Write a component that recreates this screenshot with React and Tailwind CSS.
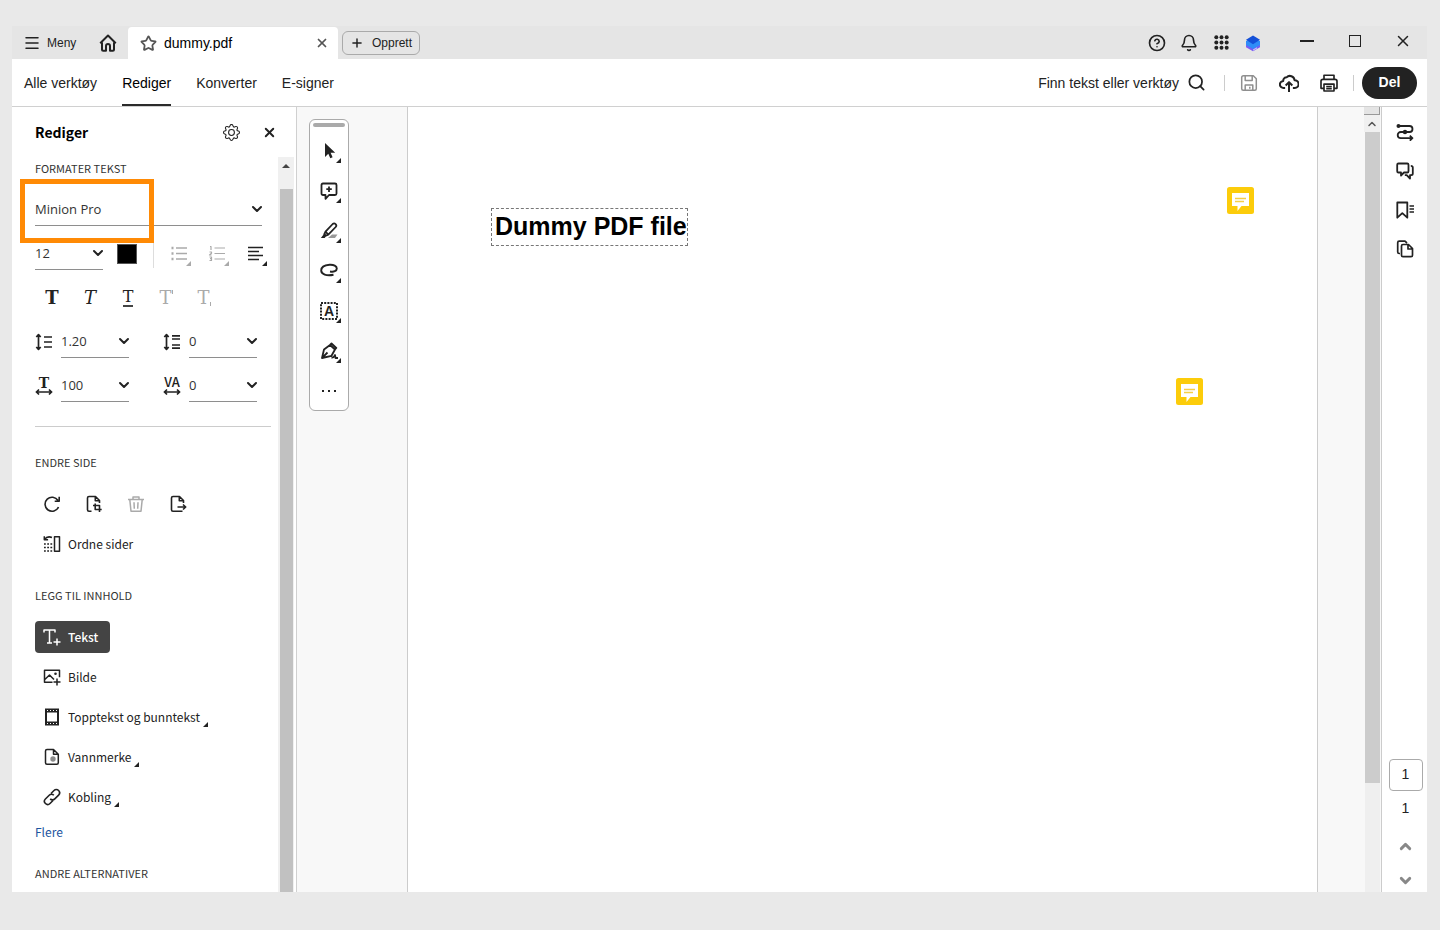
import { useState } from 'react'
import { Menu, Star, X, Plus, Search, CircleHelp, Bell, ChevronDown, ChevronUp } from 'lucide-react'
import { BsGear } from 'react-icons/bs'

const MENU_ITEMS = ['Alle verktøy', 'Rediger', 'Konverter', 'E-signer']

const SHAPES = {
  home: <path d="M2 9.2 9 2.3l7 6.9M3.600 8.500V15q0 1 1 1h2.600v-4.200a1.800 1.800 0 0 1 3.600 0V16h2.600q1 0 1-1V8.500" strokeWidth="1.800" />,
  apps: (
    <g fill="currentColor" stroke="none">
      {[3.500, 9, 14.500].map(y => [3.500, 9, 14.500].map(x => <circle key={`${x}-${y}`} cx={x} cy={y} r="2.100" />))}
    </g>
  ),
  logo: (
    <g stroke="none">
      <path d="M2 9.500 9 7l7 2.500v3.800l-7 4-7-4z" fill="#7a5cf5" />
      <path d="M2 7 9 4l7 3v4l-7 4-7-4z" fill="#2f8df8" />
      <path d="M2 5.800 9 1.500l7 4.300-7 4.400z" fill="#1450d8" />
      <path d="m9 15.500 4-2.300v1.300l-4 2.300z" fill="#c9c4fb" />
    </g>
  ),
  save: <path d="M3.500 1.700h9.800l3 3v10.100a1.500 1.500 0 0 1-1.500 1.500H3.200a1.500 1.500 0 0 1-1.500-1.500V3.500a1.800 1.800 0 0 1 1.800-1.800ZM5.200 2v4.500h7V2M5.200 16v-5h7.600v5M9.800 12.800v2" />,
  upload: <path d="M5.500 13.500H4.200a3.200 3.200 0 0 1-.4-6.400 3 3 0 0 1 3-3.200 4.200 4.200 0 0 1 7.200 2.600 3.500 3.500 0 0 1 .2 7h-1.700M9 17V8.500M6 11.200l3-3 3 3" strokeWidth="1.800" />,
  print: <path d="M4.500 5.500V2h9v3.500M4 13.800H1.800V7.500q0-1.800 1.800-1.800h10.800q1.800 0 1.800 1.800v6.300H14M4.500 10h9v6.200h-9zM6.500 12.200h5M6.500 14.200h5" />,
  bullets: <g><path d="M6 3h11M6 8.500h11M6 14h11" /><path d="M1.500 3h2M1.500 8.500h2M1.500 14h2" strokeWidth="2.500" /></g>,
  numbers: <path d="M6.500 3h10.500M6.500 8.500h10.500M6.500 14h10.500M2 1.500h1v3.500M1.500 7h2v1.300l-2 1.700h2M1.500 12h2v3.500h-2M2 13.700h1.500" strokeWidth="1.200" />,
  align: <path d="M2 2.500h15M2 6.500h11M2 10.500h15M2 14.500h11" strokeWidth="1.700" />,
  leading: <path d="M3.500 2v14M1.300 4l2.200-2.300L5.700 4M1.300 14l2.200 2.300L5.700 14M9 4h8M9 9h8M9 14h8" strokeWidth="1.700" />,
  spacing: <path d="M3.500 2v14M1.300 4l2.200-2.300L5.700 4M1.300 14l2.200 2.300L5.700 14M9 2.800h8M9 6h8M9 12h8M9 15.200h8" strokeWidth="1.700" />,
  rotate: <path d="M15 5.500A7 7 0 1 0 15.500 12M16.200 1.800v4.500h-4.500" strokeWidth="1.600" />,
  crop: <path d="M6.500 16.200H4a1.500 1.500 0 0 1-1.500-1.500V3A1.500 1.500 0 0 1 4 1.500h6.500l4 4V8M10.300 1.700v4h4M10.200 8.500v6h6.500M8 10.500h6.500v6.500" strokeWidth="1.600" />,
  trash: <path d="M1 4.500h16M6 4.300V2h6v2.300M2.800 4.700l1.200 11.500h10l1.200-11.500M7 7.200l.3 6.500M11 7.200l-.3 6.500" />,
  extract: <path d="M13.500 16.200H4a1.500 1.500 0 0 1-1.500-1.500V3A1.500 1.500 0 0 1 4 1.500h6.500l4 4V8M10.300 1.700v4h4M8.500 12h8M14 9.500l2.700 2.500-2.700 2.500" strokeWidth="1.600" />,
  organize: <g><path d="M11.500 1.800h5v14.500h-5zM1.500 4.500C3.500 1.700 6.500 1.500 9 2.500M1.300 1.300v3.500h3.800" /><path d="M1 9h8.500M1 12.500h8.500M1 16h8.500" strokeDasharray="1.800 1.400" /></g>,
  addText: <path d="M1 4.500V2h11v2.500M6.500 2v13M4 15h5M14 10.500v7M10.500 14h7" />,
  addImage: <g><path d="M9.500 14.300h-8V2.200h15v7M1.800 11.500 6.500 7l4.500 4.500M14 10.500v7M10.500 14h7" /><circle cx="12.500" cy="5.800" r="1.300" fill="currentColor" stroke="none" /></g>,
  header: <g><path d="M3 1v16M15 1v16" strokeWidth="2" /><path d="M2 2.500h14M2 15.500h14" strokeWidth="4" /><path d="m4 3 1-1m2 1 1-1m2 1 1-1m2 1 1-1M4 16l1-1m2 1 1-1m2 1 1-1m2 1 1-1" stroke="#fff" strokeWidth="1" /></g>,
  watermark: <g><path d="M4 1.500h6.500l4.800 4.700v8.600q0 1.500-1.500 1.500H4q-1.500 0-1.500-1.500V3q0-1.500 1.500-1.500ZM10.500 1.700v4.500h4.600" /><circle cx="10" cy="11" r="2.700" fill="#8c8c8c" stroke="none" /></g>,
  link: <path d="m8 5.500 3-3a3.200 3.200 0 0 1 4.600 4.600l-3.800 3.800a3.200 3.200 0 0 1-4.600 0M10 12.500l-3 3A3.200 3.200 0 0 1 2.400 11l3.800-3.800a3.200 3.200 0 0 1 4.600 0" strokeWidth="1.600" />,
  cursor: <path d="M5 1v14l3.300-3.300 2 4.600 2.300-1-2-4.500h4.600z" fill="currentColor" stroke="none" />,
  comment: <path d="M3 1.500h12q1.500 0 1.500 1.500v8.500q0 1.500-1.500 1.500H9l-3.500 3.800V13H3q-1.500 0-1.500-1.500V3Q1.500 1.500 3 1.500ZM9 4.500v5.500M6.300 7.200h5.500" strokeWidth="1.800" />,
  highlight: <g><path d="m8 16 4-3.500h5.500L15 16z" fill="#999" stroke="none" /><path d="M5.500 9.700 12.700 2q1.500-1.200 2.900.1t.1 2.900L8.300 12.700zM5.500 9.700l-1.200 2.500 1.500 1.500 2.500-1" strokeWidth="1.800" /><path d="m4 12 2 2.200L4.700 16H.8z" fill="currentColor" stroke="none" /></g>,
  lasso: <path d="M10 9.500c4 .8 6.800-.5 6.800-3 0-2.400-3-4-7.300-3.700C4.700 3.100 1.200 5.200 1.200 8.600c0 3.800 5.300 5.600 12.300 4.200" strokeWidth="1.900" />,
  textBox: <rect x="1" y="1" width="16" height="16" strokeWidth="2" strokeDasharray="2 1.200" />,
  pen: <path d="M2 16 4 7.500 10 3l5 4.500-3.500 6.300L2 16l5.500-5.500M10 3l1.500-1.500L16.300 6 15 7.500M11.500 15.500c1.500.3 2.500-.3 3.500-2.500l.5 3h2.700" strokeWidth="1.800" />,
  flow: <g><path d="M3 3h10.500a3 3 0 0 1 0 6H4.800a3 3 0 0 0 0 6.200H16M13.800 12.700l2.600 2.500-2.600 2.500" strokeWidth="1.800" /><circle cx="2.500" cy="3" r="2" fill="currentColor" stroke="none" /><circle cx="9" cy="9" r="2.200" fill="currentColor" stroke="none" /></g>,
  chats: <path d="M2.500 1.500h8.700q1.300 0 1.300 1.300v6.400q0 1.300-1.300 1.300H8l-3 3v-3H2.500q-1.300 0-1.300-1.300V2.800q0-1.300 1.300-1.300ZM14.800 3.800q2 0 2 1.800v6q0 1.600-1.600 1.600H14v3.300l-3.300-3.300H8.800" strokeWidth="1.800" />,
  bookmark: <g><path d="M1.300 1.500h10v15.200l-5-4.500-5 4.500z" strokeWidth="1.800" /><path d="M13.500 5h4.500M13.500 8h4.500M13.500 11h4.500" strokeWidth="1.300" /></g>,
  pages: <path d="M4 13.500H3.200q-1.500 0-1.500-1.500V2.700q0-1.500 1.500-1.500H9L11 3M7 4.500h5.500l4 4v6.700q0 1.500-1.500 1.500H7q-1.500 0-1.500-1.500V6q0-1.500 1.500-1.500ZM12 4.700v4.300h4.300" strokeWidth="1.700" />,
}

function Icon({ name, size = 18, className = '' }) {
  return (
    <svg width={size} height={size} viewBox="0 0 18 18" fill="none" stroke="currentColor" strokeWidth="1.500" strokeLinejoin="round" className={`shrink-0 ${className}`} aria-hidden="true">
      {SHAPES[name]}
    </svg>
  )
}

// small triangle that marks a button with a flyout
function Corner({ className }) {
  return (
    <svg width="5" height="5" viewBox="0 0 5 5" fill="currentColor" className={className} aria-hidden="true">
      <path d="M5 0v5H0z" />
    </svg>
  )
}

function WidthArrow() {
  return (
    <svg width="18" height="8" viewBox="0 0 18 8" fill="none" stroke="currentColor" strokeWidth="1.700" aria-hidden="true">
      <path d="M1.500 4h15M4 1.500 1.500 4 4 6.500M14 1.500 16.500 4 14 6.500" />
    </svg>
  )
}

function IconButton({ name, label, size, className = '', children, ...props }) {
  return (
    <button aria-label={label} className={`flex h-8 w-8 shrink-0 items-center justify-center ${className}`} {...props}>
      {name ? <Icon name={name} size={size} /> : children}
    </button>
  )
}

function SelectField({ label, options, className = '' }) {
  return (
    <label className={`flex h-[33px] items-center border-b border-[#8e8e8e] ${className}`}>
      <select aria-label={label} className="min-w-0 flex-1 appearance-none bg-transparent font-['Open_Sans',sans-serif] text-[13px] leading-5 text-[#333] outline-none">
        {options.map(o => <option key={o}>{o}</option>)}
      </select>
      <ChevronDown size={16} strokeWidth={3} className="-mr-[3px] shrink-0" />
    </label>
  )
}

function SectionTitle({ children, className = '' }) {
  return <h3 className={`pb-[2px] text-[11px] leading-[22px] text-[#333] uppercase ${className}`}>{children}</h3>
}

function TitleBar() {
  return (
    <header className="flex h-[33px] shrink-0 items-center bg-[#e5e5e5]">
      <button className="flex w-[84px] items-center gap-[6px] pl-[11px] text-xs">
        <Menu size={18} strokeWidth={2} /> Meny
      </button>
      <button aria-label="Hjem" className="flex w-8 justify-center pr-2"><Icon name="home" size={20} /></button>
      <div className="flex h-8 w-[210px] items-center self-end rounded-t bg-white pr-2 pl-3">
        <Star size={17} strokeWidth={2.500} className="mr-[7px] text-[#555]" />
        <span className="flex-1 text-sm text-black">dummy.pdf</span>
        <button aria-label="Lukk fane" className="flex w-4 justify-center text-[#555]"><X size={14} strokeWidth={3} /></button>
      </div>
      <button className="ml-1 flex h-6 items-center gap-2 rounded-md border border-[#aaa] px-[7px] text-xs">
        <Plus size={14} strokeWidth={2.500} /> Opprett
      </button>
      <div className="ml-auto flex items-center">
        <IconButton label="Hjelp"><CircleHelp size={18} strokeWidth={2.200} /></IconButton>
        <IconButton label="Varsler"><Bell size={18} strokeWidth={2.200} /></IconButton>
        <IconButton name="apps" size={17} label="Apper" />
        <IconButton name="logo" label="Konto" />
        <div className="ml-[14px] flex pb-1">
          <button aria-label="Minimer" className="flex h-7 w-12 items-center justify-center"><span className="h-[2px] w-[14px] bg-[#222]" /></button>
          <button aria-label="Maksimer" className="flex h-7 w-12 items-center justify-center"><span className="h-3 w-3 border border-[#222]" /></button>
          <button aria-label="Lukk" className="flex h-7 w-12 items-center justify-center"><X size={18} strokeWidth={2} /></button>
        </div>
      </div>
    </header>
  )
}

function MenuBar() {
  const [active, setActive] = useState('Rediger')
  return (
    <div className="flex h-12 shrink-0 items-center border-b border-[#d0d0d0] bg-white pr-[10px] pl-3 text-sm">
      <nav className="flex h-full gap-[25px]">
        {MENU_ITEMS.map(item => (
          <button
            key={item}
            onClick={() => setActive(item)}
            className={`border-y-2 border-t-transparent ${item === active ? 'border-b-[#2b2b2b] text-black' : 'border-b-transparent'}`}
          >
            {item}
          </button>
        ))}
      </nav>
      <div className="ml-auto flex items-center gap-2">
        <button className="mr-[10px] flex items-center gap-2">
          Finn tekst eller verktøy <Search size={19} strokeWidth={2.200} />
        </button>
        <span className="h-4 w-px bg-[#ccc]" />
        <IconButton name="save" label="Lagre" className="text-[#8f8f8f]" disabled />
        <IconButton name="upload" size={20} label="Last opp" />
        <IconButton name="print" size={20} label="Skriv ut" />
        <span className="h-4 w-px bg-[#ccc]" />
        <button className="h-8 w-[55px] rounded-full bg-[#222] pb-[2px] font-bold text-white">Del</button>
      </div>
    </div>
  )
}

function TextFormat() {
  const serif = "font-['DejaVu_Serif',serif] leading-none"
  return (
    <section>
      <SectionTitle>Formater tekst</SectionTitle>
      <div className="relative mt-3 mr-[9px]">
        <SelectField label="Skrift" options={['Minion Pro', 'Arial']} />
        <div className="pointer-events-none absolute -top-[14px] -left-[15px] h-[64px] w-[134px] border-5 border-[#ff8a05]" />
      </div>

      <div className="mt-[11px] flex h-[33px] items-center">
        <SelectField label="Størrelse" options={['12', '14', '18']} className="w-[68px]" />
        <button aria-label="Tekstfarge" className="ml-[14px] h-5 w-5 border border-[#555] bg-black" />
        <span className="mr-[9px] ml-4 h-7 w-px bg-[#ddd]" />
        <div className="flex gap-[6px]">
          <IconButton label="Punktliste" className="relative text-[#aaa]" disabled>
            <Icon name="bullets" /><Corner className="absolute right-1 bottom-1" />
          </IconButton>
          <IconButton label="Nummerert liste" className="relative text-[#aaa]" disabled>
            <Icon name="numbers" /><Corner className="absolute right-1 bottom-1" />
          </IconButton>
          <IconButton label="Juster" className="relative">
            <Icon name="align" /><Corner className="absolute right-1 bottom-1" />
          </IconButton>
        </div>
      </div>

      <div className="mt-[11px] flex h-[33px] items-center gap-[6px] pl-px">
        <IconButton label="Fet"><span className={`${serif} text-lg font-bold`}>T</span></IconButton>
        <IconButton label="Kursiv"><span className={`${serif} text-lg italic`}>T</span></IconButton>
        <IconButton label="Understreket"><span className={`${serif} border-b-2 border-[#444] text-base`}>T</span></IconButton>
        <IconButton label="Hevet" className="text-[#aaa]" disabled>
          <span className={`${serif} text-lg`}>T</span><span className="mt-2 h-1 w-px self-start bg-current" />
        </IconButton>
        <IconButton label="Senket" className="text-[#aaa]" disabled>
          <span className={`${serif} text-lg`}>T</span><span className="mb-2 h-1 w-px self-end bg-current" />
        </IconButton>
      </div>

      <div className="mt-[11px] grid grid-cols-[94px_94px] gap-x-[34px] gap-y-[11px]">
        <div className="flex items-center gap-2">
          <Icon name="leading" />
          <SelectField label="Linjeavstand" options={['1.20', '1.50']} className="w-[68px]" />
        </div>
        <div className="flex items-center gap-2">
          <Icon name="spacing" />
          <SelectField label="Avsnittsavstand" options={['0', '6']} className="w-[68px]" />
        </div>
        <div className="flex items-center gap-2">
          <span className="flex w-[18px] flex-col items-center">
            <span className={`${serif} h-3 text-sm leading-3 font-bold`}>T</span>
            <WidthArrow />
          </span>
          <SelectField label="Vannrett skala" options={['100', '90']} className="w-[68px]" />
        </div>
        <div className="flex items-center gap-2">
          <span className="flex w-[18px] flex-col items-center">
            <span className="h-3 text-[13px] leading-3 font-medium">VA</span>
            <WidthArrow />
          </span>
          <SelectField label="Tegnavstand" options={['0', '10']} className="w-[68px]" />
        </div>
      </div>
    </section>
  )
}

const ADD_ITEMS = [
  { icon: 'addText', label: 'Tekst', active: true },
  { icon: 'addImage', label: 'Bilde' },
  { icon: 'header', label: 'Topptekst og bunntekst', more: true },
  { icon: 'watermark', label: 'Vannmerke', more: true },
  { icon: 'link', label: 'Kobling', more: true },
]

function Sidebar() {
  return (
    <aside className="flex w-[285px] shrink-0 flex-col border-r border-[#d0d0d0] bg-white font-['Noto_Sans_CJK_SC',sans-serif]">
      <div className="flex h-[50px] shrink-0 items-center pr-[11px] pl-[23px]">
        <h2 className="flex-1 text-sm leading-6 font-bold text-black">Rediger</h2>
        <IconButton label="Innstillinger"><BsGear size={17} /></IconButton>
        <IconButton label="Lukk panel" className="ml-[6px]"><X size={15} strokeWidth={3} /></IconButton>
      </div>
      <div className="flex min-h-0 flex-1">
        <div className="min-w-0 flex-1 overflow-hidden pr-[7px] pl-[23px]">
          <TextFormat />
          <hr className="mt-6 border-[#ccc]" />

          <SectionTitle className="mt-6">Endre side</SectionTitle>
          <div className="mt-[13px] flex gap-[10px] pl-px">
            <IconButton name="rotate" label="Roter" />
            <IconButton name="crop" label="Beskjær" />
            <IconButton name="trash" label="Slett" className="text-[#aaa]" disabled />
            <IconButton name="extract" label="Trekk ut" />
          </div>
          <button className="mt-2 flex h-8 items-center gap-[7px] px-2 text-xs leading-5">
            <Icon name="organize" /> Ordne sider
          </button>

          <SectionTitle className="mt-6">Legg til innhold</SectionTitle>
          <div className="mt-[13px] flex flex-col items-start gap-2">
            {ADD_ITEMS.map(item => (
              <button
                key={item.label}
                className={`flex h-8 items-center gap-[7px] rounded pl-2 text-xs leading-5 ${item.active ? 'bg-[#444] pr-3 font-medium text-white' : ''}`}
              >
                <Icon name={item.icon} />
                {item.label}
                {item.more && <Corner className="-ml-1 mb-[6px] self-end" />}
              </button>
            ))}
          </div>
          <a href="#flere" className="mt-[7px] block w-fit text-xs leading-6 text-[#1c54a0]">Flere</a>
          <SectionTitle className="mt-[18px]">Andre alternativer</SectionTitle>
        </div>
        <div className="mr-[2px] flex w-4 flex-col bg-[#f0f0f0]">
          <div className="flex h-8 justify-center pt-[7px]">
            <svg width="8" height="4" viewBox="0 0 8 4" fill="#444"><path d="m0 4 4-4 4 4z" /></svg>
          </div>
          <div className="mr-px ml-[2px] flex-1 bg-[#c1c1c1]" />
        </div>
      </div>
    </aside>
  )
}

const TOOLS = [
  { icon: 'cursor', label: 'Velg' },
  { icon: 'comment', label: 'Kommentar' },
  { icon: 'highlight', label: 'Uthev' },
  { icon: 'lasso', label: 'Tegn' },
  { icon: 'textBox', label: 'Tekstboks', letter: 'A' },
  { icon: 'pen', label: 'Signer' },
]

function QuickTools() {
  return (
    <div className="flex w-10 flex-col rounded-md border border-[#aaa] bg-white pt-[3px]">
      <span className="mx-[3px] mb-1 h-1 rounded-full bg-[#aaa]" />
      {TOOLS.map(t => (
        <button key={t.icon} aria-label={t.label} className="relative grid h-10 place-items-center">
          <Icon name={t.icon} className="col-start-1 row-start-1" />
          {t.letter && <span className="col-start-1 row-start-1 text-sm leading-4 font-bold">{t.letter}</span>}
          <Corner className="absolute right-[7px] bottom-2" />
        </button>
      ))}
      <button aria-label="Mer" className="flex h-[39px] items-center justify-center gap-1">
        {[0, 1, 2].map(i => <span key={i} className="h-[2px] w-[2px] bg-[#222]" />)}
      </button>
    </div>
  )
}

function Note({ className }) {
  return (
    <button aria-label="Notat" className={`absolute ${className}`}>
      <svg width="27" height="27" viewBox="0 0 27 27">
        <rect width="27" height="27" rx="2.500" fill="#fccc0a" />
        <path d="M5 6h17v13h-7.500L10.500 24v-5H5z" fill="#fff" />
        <path d="M8 11.500h11M8 14.500h9" stroke="#f5cf45" strokeWidth="1.300" />
      </svg>
    </button>
  )
}

function Canvas() {
  return (
    <main className="flex min-w-0 flex-1 bg-[#f8f8f8]">
      <div className="flex w-[110px] shrink-0 items-start pt-3 pl-3"><QuickTools /></div>
      <article className="relative min-w-0 flex-1 border-x border-[#ccc] bg-white pt-[101px] pl-[83px]">
        <h1 className="w-fit border border-dashed border-[#777] pb-[2px] pl-[3px] text-[25px] leading-[34px] font-bold text-black">Dummy PDF file</h1>
        <Note className="top-20 right-[63px]" />
        <Note className="top-[271px] right-[114px]" />
      </article>
      <div className="mr-px ml-[46px] flex w-4 flex-col">
        <div className="h-2 border-r border-b border-[#999] bg-[#e4e4e4]" />
        <div className="flex h-[17px] items-center justify-center bg-[#f0f0f0]"><ChevronUp size={12} strokeWidth={3} className="text-[#555]" /></div>
        <div className="ml-px flex-[6] bg-[#ccc]" />
        <div className="ml-px flex-1 bg-[#efefef]" />
      </div>
    </main>
  )
}

function RightRail() {
  return (
    <aside className="flex w-[46px] shrink-0 flex-col items-center justify-between border-l border-[#ccc] bg-white pt-[5px]">
      <div className="flex flex-col">
        {[['flow', 'Verktøy'], ['chats', 'Kommentarer'], ['bookmark', 'Bokmerker'], ['pages', 'Sider']].map(([icon, label]) => (
          <button key={icon} aria-label={label} className="flex h-[39px] items-center"><Icon name={icon} /></button>
        ))}
      </div>
      <div className="flex flex-col items-center pl-[2px] text-sm">
        <input aria-label="Side" defaultValue="1" className="h-8 w-[34px] rounded border border-[#aaa] pb-[3px] text-center" />
        <span className="mt-[5px] leading-6">1</span>
        <button aria-label="Forrige side" className="mt-[14px] flex h-6 items-center text-[#888]"><ChevronUp size={17} strokeWidth={4} /></button>
        <button aria-label="Neste side" className="mt-[10px] flex h-6 items-center text-[#888]"><ChevronDown size={17} strokeWidth={4} /></button>
      </div>
    </aside>
  )
}

export default function App() {
  return (
    <div className="flex h-screen flex-col bg-[#e9e9e9] pt-[26px] pr-[13px] pb-[38px] pl-3 font-['Liberation_Sans',sans-serif] text-[#222]">
      <TitleBar />
      <MenuBar />
      <div className="flex min-h-0 flex-1">
        <Sidebar />
        <Canvas />
        <RightRail />
      </div>
    </div>
  )
}
